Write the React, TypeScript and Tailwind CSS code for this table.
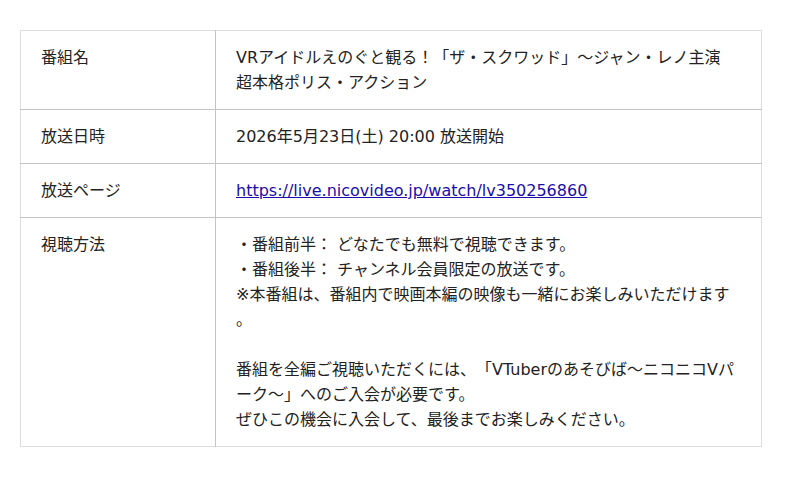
import React from "react";

const rows: { label: string; content: React.ReactNode }[] = [
  {
    label: "番組名",
    content: "VRアイドルえのぐと観る！「ザ・スクワッド」〜ジャン・レノ主演超本格ポリス・アクション",
  },
  { label: "放送日時", content: "2026年5月23日(土) 20:00 放送開始" },
  {
    label: "放送ページ",
    content: (
      <a href="#" className="text-[#1a0dab] underline">
        https://live.nicovideo.jp/watch/lv350256860
      </a>
    ),
  },
  {
    label: "視聴方法",
    content: (
      <>
        <div>・番組前半： どなたでも無料で視聴できます。</div>
        <div>・番組後半： チャンネル会員限定の放送です。</div>
        <div>※本番組は、番組内で映画本編の映像も一緒にお楽しみいただけます。</div>
        <div>&nbsp;</div>
        <div>番組を全編ご視聴いただくには、「VTuberのあそびば〜ニコニコVパーク〜」へのご入会が必要です。</div>
        <div>ぜひこの機会に入会して、最後までお楽しみください。</div>
      </>
    ),
  },
];

export default function App() {
  return (
    <div
      className="w-[800px] h-[477px] bg-white pt-[30px] pl-[20px]"
      style={{ fontFamily: '"DejaVu Sans", "Noto Sans CJK JP", sans-serif' }}
    >
      <table className="w-[742px] border-collapse border border-[#dddddd] text-[16px] leading-[25px] text-[#222222] table-fixed [text-spacing-trim:space-all]">
        <colgroup>
          <col className="w-[195px]" />
          <col />
        </colgroup>
        <tbody>
          {rows.map((r) => (
            <tr key={r.label} className="border-b border-[#c4c4c4] last:border-b-[#dddddd]">
              <td className="align-top px-[20px] py-[14px] border-r border-[#c4c4c4]">{r.label}</td>
              <td className="align-top pl-[20px] pr-[26px] py-[14px] [line-break:anywhere]">{r.content}</td>
            </tr>
          ))}
        </tbody>
      </table>
    </div>
  );
}
